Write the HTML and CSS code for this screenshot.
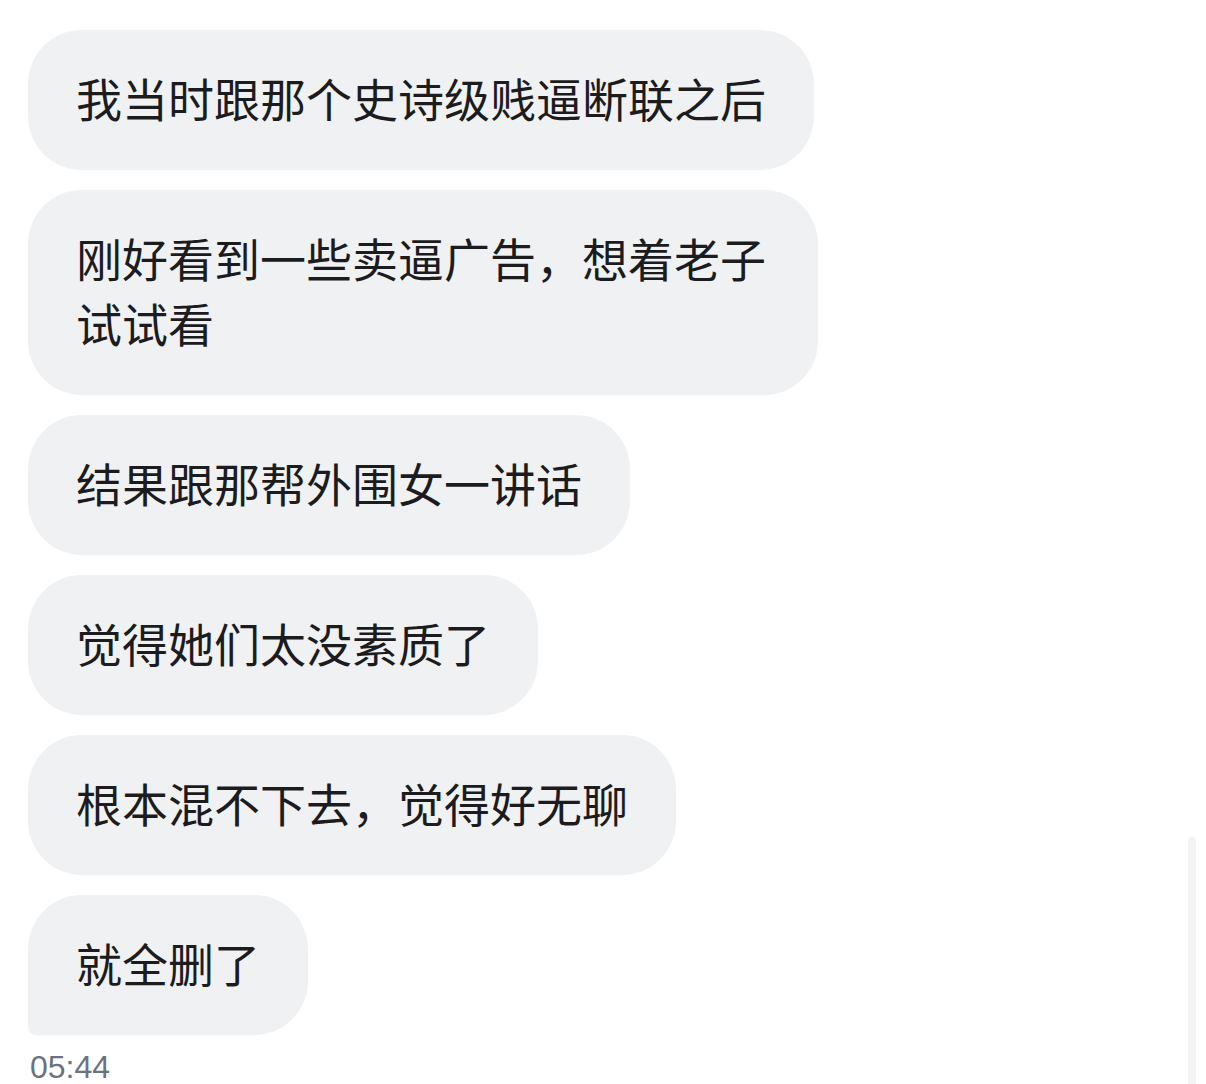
FILE: index.html
```html
<!DOCTYPE html>
<html lang="zh-CN">
<head>
    <meta charset="UTF-8">
    <meta name="viewport" content="width=device-width, initial-scale=1.0">
    <title>聊天记录</title>
    <link rel="stylesheet" href="styles.css">
</head>
<body>
    <div class="chat">
        <div class="bubble">我当时跟那个史诗级贱逼断联之后</div>
        <div class="bubble">刚好看到一些卖逼广告，想着老子试试看</div>
        <div class="bubble">结果跟那帮外围女一讲话</div>
        <div class="bubble">觉得她们太没素质了</div>
        <div class="bubble">根本混不下去，觉得好无聊</div>
        <div class="bubble last">就全删了</div>
        <div class="time">05:44</div>
    </div>
    <div class="scrollbar"></div>
</body>
</html>
```

FILE: styles.css
```css
body {
    margin: 0;
    background-color: #fff;
    font-family: "Noto Sans CJK SC", "Noto Sans", sans-serif;
    color: #1c1c1e;
    overflow: hidden;
}
.chat {
    display: flex;
    flex-direction: column;
    align-items: flex-start;
    gap: 20px;
    padding: 30px 28px 0;
}
.bubble {
    box-sizing: border-box;
    max-width: 790px;
    padding: 35px 48px 40px;
    font-size: 46px;
    line-height: 65px;
    background-color: #f0f1f3;
    border-radius: 54px;
}
.bubble.last {
    border-bottom-left-radius: 8px;
}
.time {
    margin-top: -8px;
    padding-left: 2px;
    font-family: "Liberation Sans", Arial, sans-serif;
    font-size: 32px;
    line-height: 40px;
    color: #6b7280;
}
.scrollbar {
    position: absolute;
    top: 837px;
    right: 10px;
    width: 8px;
    height: 250px;
    border-radius: 4px;
    background-color: #f3f3f3;
}
```
